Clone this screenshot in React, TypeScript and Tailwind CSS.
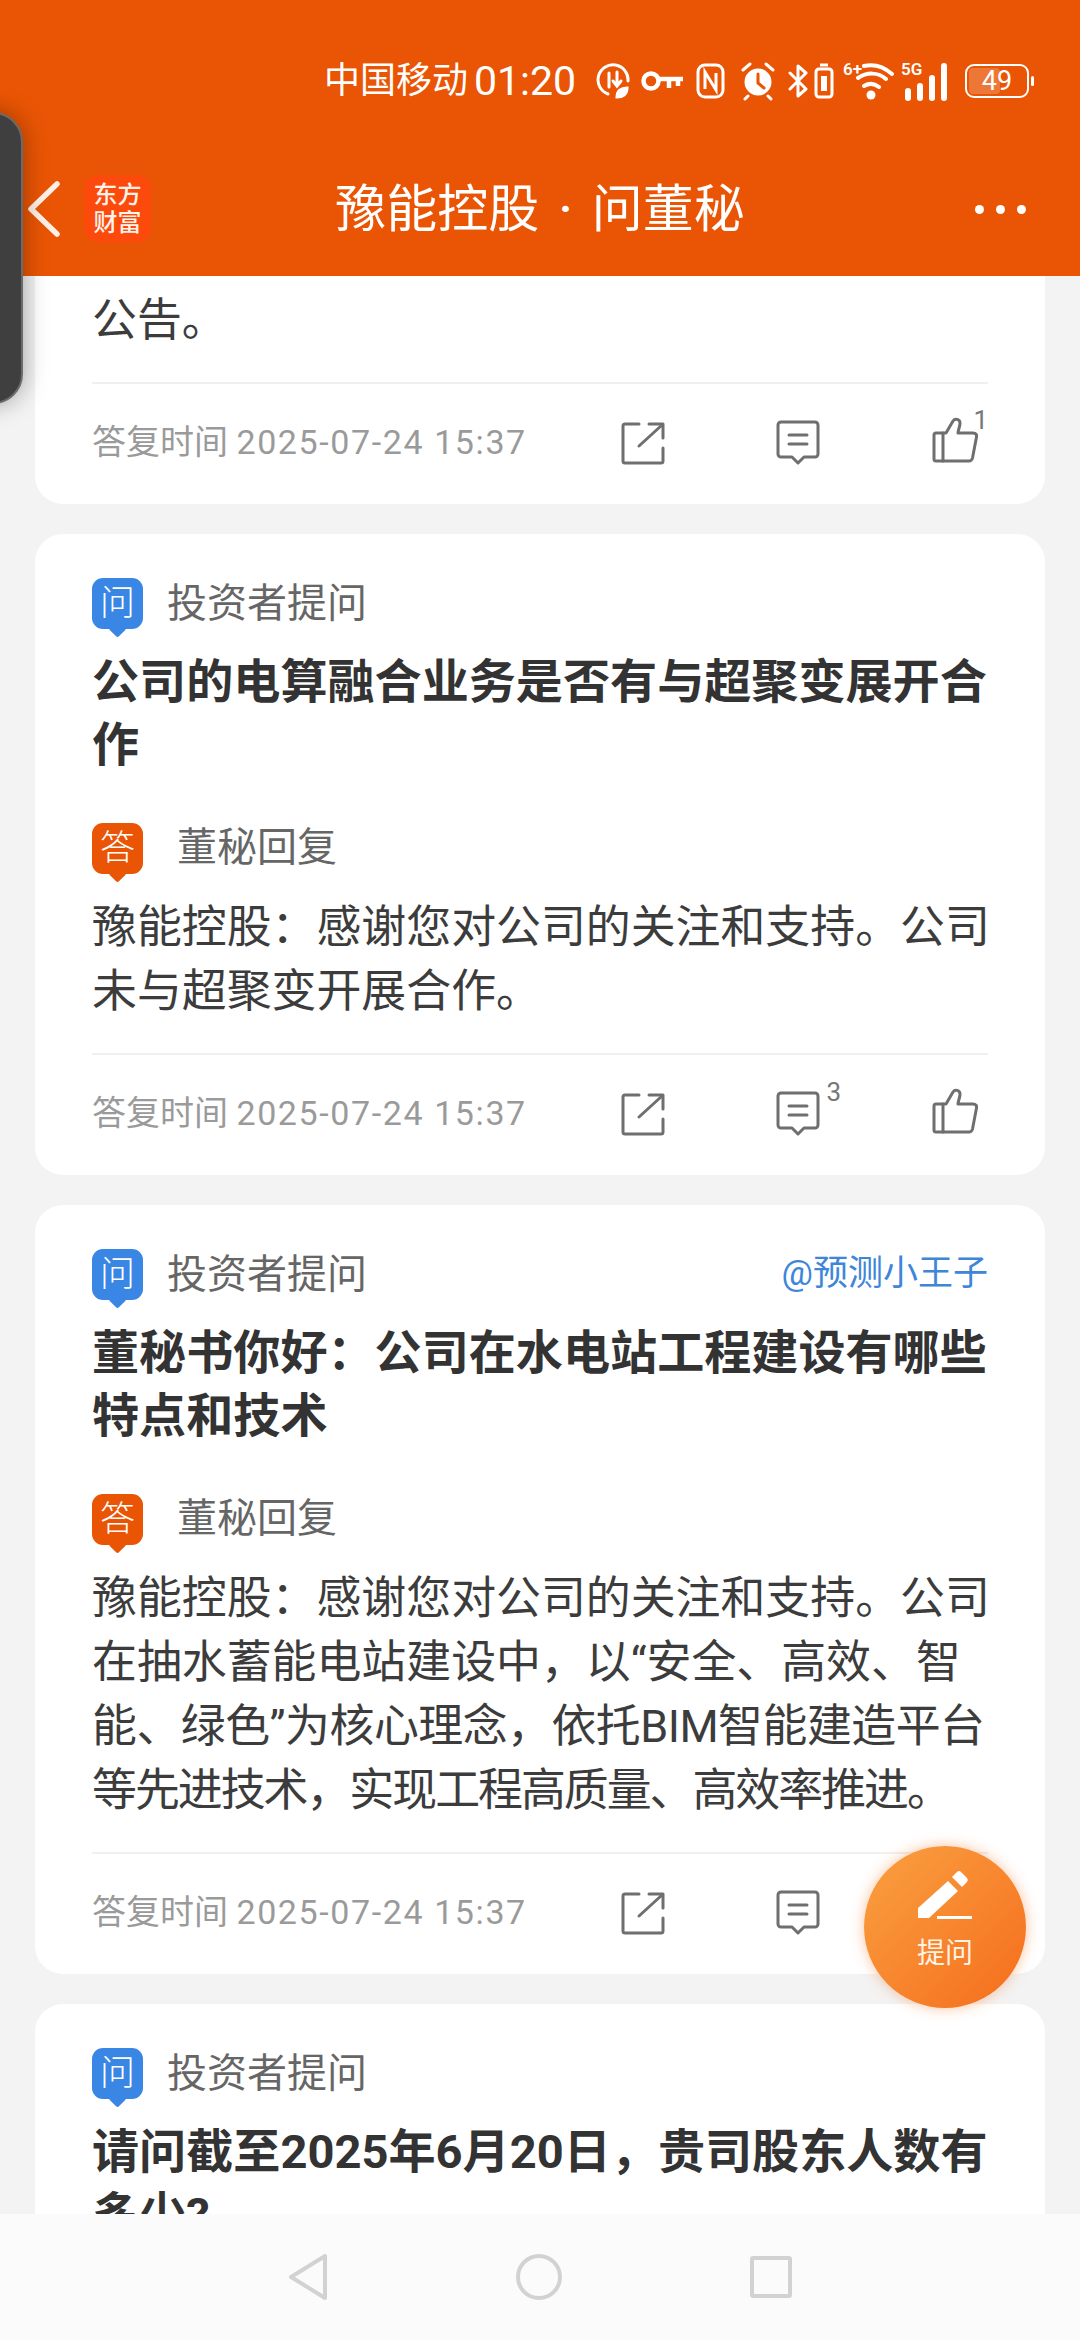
import React from 'react';

const ShareIcon = () => (
  <svg width="44" height="44" viewBox="0 0 44 44" fill="none" stroke="#6f6f6f" strokeWidth="3" strokeLinecap="round" strokeLinejoin="round">
    <path d="M18 3H4a2 2 0 0 0-2 2v35a2 2 0 0 0 2 2h36a2 2 0 0 0 2-2V27" />
    <path d="M28 3h14v14" />
    <path d="M41 4 18 25" />
  </svg>
);

const CommentIcon = () => (
  <svg width="44" height="46" viewBox="0 0 44 46" fill="none" stroke="#6f6f6f" strokeWidth="3" strokeLinecap="round" strokeLinejoin="round">
    <path d="M5 2h34a3 3 0 0 1 3 3v29a3 3 0 0 1-3 3H28l-6 6-6-6H5a3 3 0 0 1-3-3V5a3 3 0 0 1 3-3Z" />
    <path d="M13 15h18M13 24h18" />
  </svg>
);

const ThumbIcon = () => (
  <svg width="46" height="46" viewBox="0 0 46 46" fill="none" stroke="#6f6f6f" strokeWidth="3" strokeLinecap="round" strokeLinejoin="round">
    <path d="M4 16h7v28H4a2 2 0 0 1-2-2V18a2 2 0 0 1 2-2Z" />
    <path d="M11 16h3l7-12c2-3 7-2 7 2 0 4-2 7-2 10h15c3 0 4 2 3.500 4l-4 21c-.5 2-2 3-3.500 3H11" />
  </svg>
);

const Badge = ({ text, color }: { text: string; color: string }) => (
  <div className={`relative flex h-[51px] w-[51px] shrink-0 items-center justify-center rounded-[11px] text-[35px] leading-none font-light text-white ${color}`}>
    {text}
    <div className={`absolute -bottom-[6px] left-[19px] h-[13px] w-[13px] rotate-45 rounded-[2px] ${color}`} />
  </div>
);

const Footer = ({ comments, likes }: { comments?: number; likes?: number }) => (
  <div className="mx-[57px] flex h-[122px] items-center border-t-2 border-[#f0f0f0] pb-[2px]">
    <span className="flex-1 pb-[2px] text-[34px] whitespace-nowrap text-[#9a9a9a]">
      答复时间 <span className="tracking-[1.6px]">2025-07-24 15:37</span>
    </span>
    <div className="mr-[111px] flex h-[44px] w-[44px] items-center">
      <ShareIcon />
    </div>
    <div className="relative mr-[112px] h-[46px] w-[44px]">
      <CommentIcon />
      {comments && <span className="absolute -top-[12px] -right-[21px] text-[26px] leading-none text-[#777]">{comments}</span>}
    </div>
    <div className="relative mr-[10px] -mt-[6px] h-[46px] w-[46px]">
      <ThumbIcon />
      {likes && <span className="absolute -top-[10px] -right-[10px] text-[26px] leading-none text-[#777]">{likes}</span>}
    </div>
  </div>
);

type QA = { title: string; answer?: React.ReactNode; asker?: string; comments?: number };

const Card = ({ title, answer, asker, comments }: QA) => (
  <div className="shrink-0 rounded-[28px] bg-white">
    <div className="px-[57px] pt-[43px]">
      <div className="flex h-[52px] items-center gap-[24px]">
        <Badge text="问" color="bg-[#3a86e4]" />
        <span className="flex-1 pt-[2px] text-[40px] text-[#666]">投资者提问</span>
        {asker && <span className="text-[35px] text-[#3d86d8]">{asker}</span>}
      </div>
      <h2 className="mt-[21px] mb-[-1px] -mr-[6px] text-[47.1px] leading-[63px] font-bold text-[#333]">{title}</h2>
      {answer && (
        <>
          <div className="mt-[47px] flex h-[52px] items-center gap-[34px]">
            <Badge text="答" color="bg-[#e95504]" />
            <span className="text-[40px] text-[#666]">董秘回复</span>
          </div>
          <p className="mt-[22px] mb-[29px] -mr-[6px] text-[44.9px] leading-[64px] text-[#3c3c3c]">{answer}</p>
        </>
      )}
    </div>
    {answer && <Footer comments={comments} />}
  </div>
);

export default function App() {
  return (
    <div lang="zh-CN" className="relative flex h-[2340px] w-[1080px] flex-col overflow-hidden bg-[#f3f3f3] font-['Roboto','Noto_Sans_CJK_SC',sans-serif]">
      {/* Header */}
      <header className="h-[276px] shrink-0 bg-[#e95504] pt-[58px] text-white">
        <div className="flex h-[46px] items-center justify-end pr-[46px]">
          <span className="text-[36px] leading-none">中国移动</span>
          <span className="ml-[6px] text-[41px] leading-none">01:20</span>
          <svg className="ml-[20px]" width="35" height="40" viewBox="0 0 35 40" fill="none" stroke="#fff" strokeWidth="3" strokeLinecap="round">
            <path d="M12 33A15 15 0 1 1 32 20" />
            <path d="M13 12v14M21 11v13M17 20l4 5 4-5" />
            <path d="M21 36c0-6 4-9 10-9 0 6-4 9-10 9Z" fill="#fff" />
          </svg>
          <svg className="ml-[10px]" width="44" height="22" viewBox="0 0 44 22" fill="none" stroke="#fff" strokeWidth="4.500">
            <circle cx="10" cy="11" r="7.500" />
            <path d="M18 9h24M28 9v9M37 9v7" />
          </svg>
          <svg className="ml-[11px]" width="29" height="36" viewBox="0 0 29 36" fill="none" stroke="#fff" strokeWidth="3">
            <rect x="2" y="2" width="25" height="32" rx="7" />
            <path d="M9 26V9l11 18V10" />
          </svg>
          <svg className="ml-[15px]" width="36" height="40" viewBox="0 0 36 40" fill="none" stroke="#fff" strokeWidth="3" strokeLinecap="round">
            <circle cx="18" cy="21" r="12" fill="#fff" />
            <path d="M3 9 10 3M33 9l-7-6M8 35l-3 3M28 35l3 3" />
            <path d="M18 13v9l6 5" stroke="#e95504" />
          </svg>
          <svg className="ml-[12px]" width="20" height="34" viewBox="0 0 20 34" fill="none" stroke="#fff" strokeWidth="3" strokeLinecap="round" strokeLinejoin="round">
            <path d="M2 9l16 16-8 7V2l8 7L2 25" />
          </svg>
          <svg className="ml-[6px]" width="20" height="36" viewBox="0 0 20 36" fill="none" stroke="#fff" strokeWidth="3">
            <rect x="2" y="6" width="16" height="28" rx="3" />
            <path d="M6 2h8" />
            <rect x="7" y="13" width="6" height="15" fill="#fff" stroke="none" />
          </svg>
          <div className="relative ml-[10px] h-[40px] w-[51px]">
            <span className="absolute top-0 -left-[1px] text-[17px] leading-none font-semibold">6+</span>
            <svg className="absolute top-0 left-[2px]" width="49" height="40" viewBox="0 0 49 40" fill="none" stroke="#fff" strokeWidth="4" strokeLinecap="round">
              <path d="M18 5c9-2 19 0 28 8M12 17c9-6 20-6 28 1M18 25c5-3 10-3 15 1" />
              <circle cx="25" cy="34" r="4.500" fill="#fff" stroke="none" />
            </svg>
          </div>
          <div className="relative ml-[6px] h-[40px] w-[52px]">
            <span className="absolute top-0 left-0 text-[17px] leading-none font-semibold">5G</span>
            <svg className="absolute top-0 left-0" width="52" height="40" viewBox="0 0 52 40" fill="#fff">
              <rect x="4" y="27" width="6" height="13" rx="3" />
              <rect x="16" y="22" width="6" height="18" rx="3" />
              <rect x="28" y="14" width="6" height="26" rx="3" />
              <rect x="40" y="2" width="6" height="38" rx="3" />
            </svg>
          </div>
          <div className="ml-[12px] flex items-center gap-[2px]">
            <div className="relative flex h-[34px] w-[64px] items-center justify-center rounded-[9px] border-[2.5px] border-white">
              <div className="absolute top-[2px] bottom-[2px] left-[2px] w-[31px] rounded-[4px] bg-white/20" />
              <span className="relative text-[27px] leading-none">49</span>
            </div>
            <div className="h-[10px] w-[3px] rounded-full bg-white" />
          </div>
        </div>
        <nav className="relative mt-[38px] flex h-[134px] items-center justify-center">
          <svg className="absolute top-[39px] left-[28px]" width="32" height="56" viewBox="0 0 32 56" fill="none" stroke="#fdf0e6" strokeWidth="5.500" strokeLinecap="round" strokeLinejoin="round">
            <path d="M29 3 3 28l26 25" />
          </svg>
          <div className="absolute top-[33px] left-[84px] flex h-[67px] w-[67px] flex-col items-center justify-center rounded-[14px] bg-[#fb4a0c] text-[24px] leading-[28px] font-medium text-[#fff3ea]">
            <span>东方</span>
            <span>财富</span>
          </div>
          <span className="text-[51px] leading-none">豫能控股</span>
          <span className="mx-[20px] text-[42px] leading-none font-bold">·</span>
          <span className="text-[51px] leading-none">问董秘</span>
          <div className="absolute top-[63px] right-[54px] flex gap-[12px]">
            <div className="h-[9px] w-[9px] rounded-full bg-white" />
            <div className="h-[9px] w-[9px] rounded-full bg-white" />
            <div className="h-[9px] w-[9px] rounded-full bg-white" />
          </div>
        </nav>
      </header>

      {/* Question list */}
      <main className="flex min-h-0 flex-1 flex-col gap-[30px] overflow-hidden px-[35px]">
        <div className="shrink-0 rounded-b-[28px] bg-white">
          <p className="mx-[57px] pt-[13px] pb-[29px] text-[44.9px] leading-[64px] text-[#3c3c3c]">公告。</p>
          <Footer likes={1} />
        </div>
        <Card
          title="公司的电算融合业务是否有与超聚变展开合作"
          answer="豫能控股：感谢您对公司的关注和支持。公司未与超聚变开展合作。"
          comments={3}
        />
        <Card
          title="董秘书你好：公司在水电站工程建设有哪些特点和技术"
          asker="@预测小王子"
          answer={
            <>
              豫能控股：感谢您对公司的关注和支持。公司在抽水蓄能电站建设中，以“安全、高效、智
              <span className="block tracking-[-0.5px] whitespace-nowrap">能、绿色”为核心理念，依托BIM智能建造平台</span>
              <span className="block tracking-[-2px] whitespace-nowrap">等先进技术，实现工程高质量、高效率推进。</span>
            </>
          }
        />
        <Card title="请问截至2025年6月20日，贵司股东人数有多少?" />
      </main>

      {/* Bottom nav */}
      <footer className="flex h-[126px] shrink-0 items-center justify-center bg-[#fbfbfb]">
        <svg width="40" height="48" viewBox="0 0 40 48" fill="none" stroke="#d2d2d2" strokeWidth="4" strokeLinejoin="round">
          <path d="M37 3v42L3 24Z" />
        </svg>
        <div className="mx-[188px] h-[46px] w-[46px] rounded-full border-[4px] border-[#d2d2d2]" />
        <div className="h-[42px] w-[42px] rounded-[3px] border-[4px] border-[#d2d2d2]" />
      </footer>

      {/* Floating ask button */}
      <div className="absolute top-[1846px] left-[864px] flex h-[162px] w-[162px] flex-col items-center rounded-full bg-gradient-to-br from-[#f9a040] to-[#f56c1a] pt-[24px] text-white shadow-[0_0_14px_rgba(245,120,40,0.45)]">
        <svg width="56" height="50" viewBox="0 0 56 50" fill="#fff">
          <path d="M31 11 41 21 12 48H1V38Z" />
          <path d="M35 7l5-5a3 3 0 0 1 4 0l6 6a3 3 0 0 1 0 4l-5 5Z" />
          <rect x="20" y="46" width="35" height="3" />
        </svg>
        <span className="mt-[14px] text-[28px] leading-[40px] text-[#fff3e4]">提问</span>
      </div>

      {/* Floating side handle */}
      <div className="absolute top-[112px] -left-[30px] h-[292px] w-[53px] rounded-r-[30px] border-2 border-[#6a6a6a] bg-[#3f3f3f] shadow-[0_0_24px_rgba(0,0,0,0.35)]" />
    </div>
  );
}
